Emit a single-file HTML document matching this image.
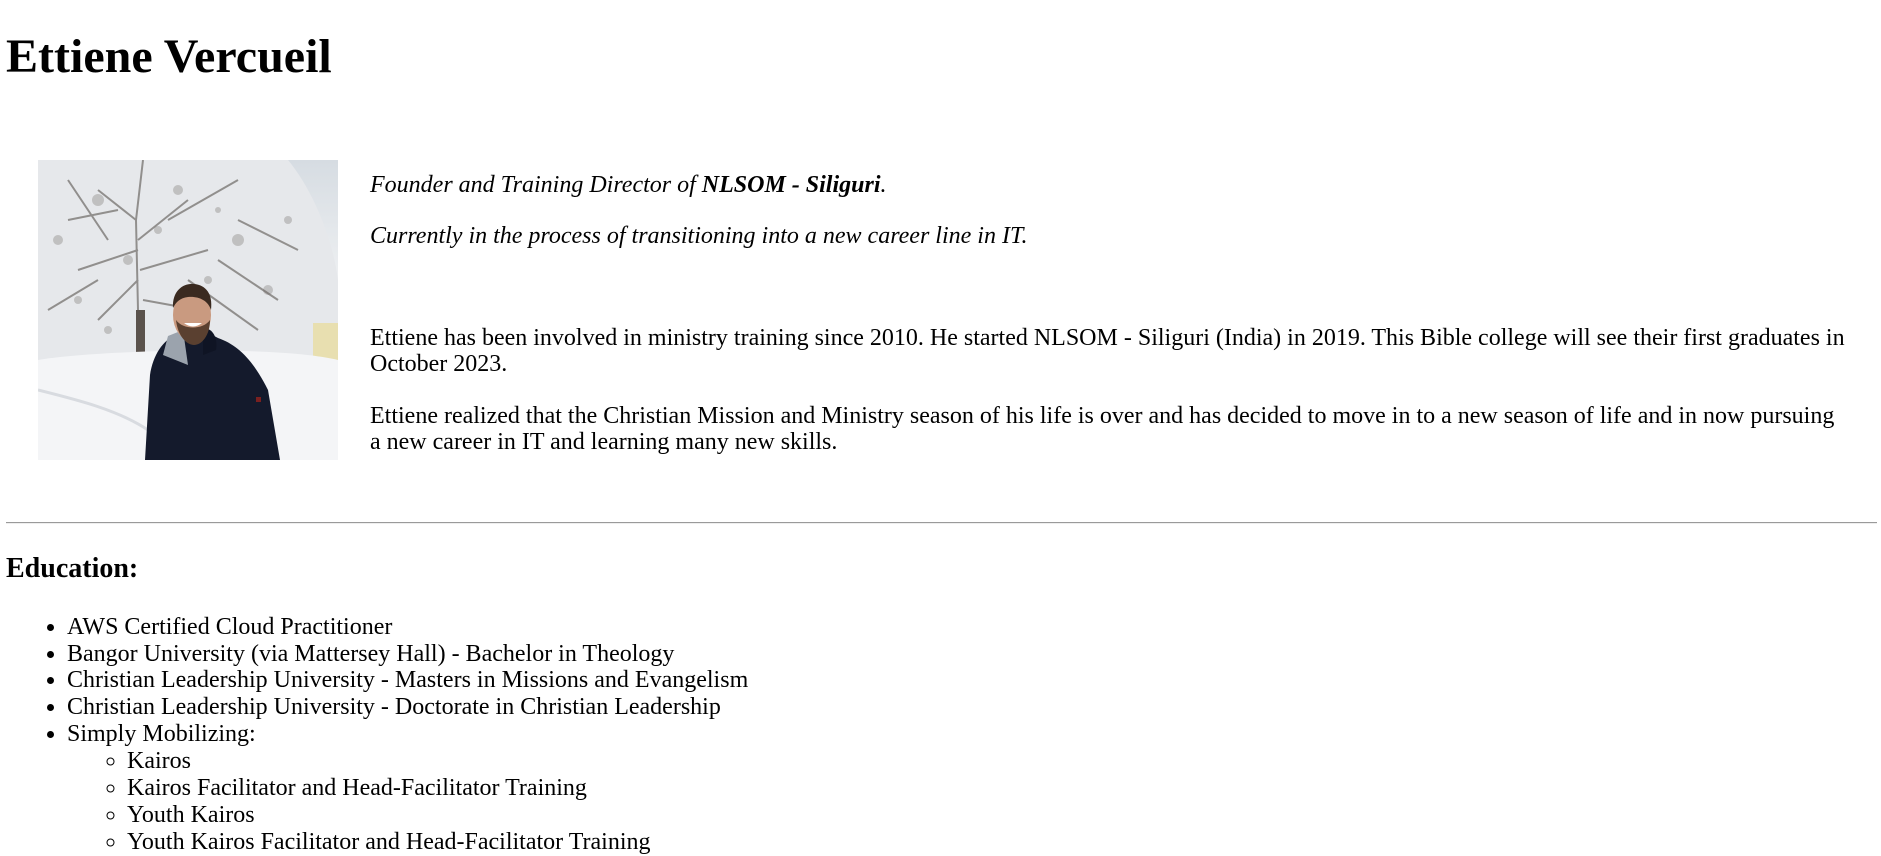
<!DOCTYPE html>
<html><head><meta charset="utf-8"><style>
html,body{margin:0;padding:0;background:#fff;}
body{width:1881px;height:855px;position:relative;overflow:hidden;font-family:"Liberation Serif","Times New Roman",serif;color:#000;font-size:24px;line-height:26.57px;}
.a{position:absolute;margin:0;white-space:nowrap;}
h1{font-size:48px;line-height:53.14px;font-weight:bold;}
h3{font-size:28px;line-height:31px;font-weight:bold;}
ul{margin:0;padding-left:59px;}
ul ul{padding-left:60px;list-style:circle;}
li{line-height:26.9px;}
hr.a{left:6px;width:1871px;top:522px;height:0;border:0;border-top:1px solid #9a9a9a;border-bottom:1px solid #eee;}
</style></head><body>
<h1 class="a" style="left:6px;top:29.5px;">Ettiene Vercueil</h1>

<svg class="a" style="left:38px;top:160px;" width="300" height="300" viewBox="0 0 300 300">
<defs><linearGradient id="sk" x1="0" y1="0" x2="0" y2="1"><stop offset="0" stop-color="#d6dce2"/><stop offset="1" stop-color="#eef0f2"/></linearGradient></defs>
<rect width="300" height="300" fill="#f0f1f3"/>
<rect x="230" y="0" width="70" height="120" fill="url(#sk)"/>
<path d="M0 0H250C275 30 295 80 300 120V200H0Z" fill="#e6e8eb"/>
<g stroke="#5a5550" stroke-width="2" fill="none" opacity=".6">
<path d="M105 0L98 60L100 150L105 160"/><path d="M98 60L60 30M100 80L150 40M100 90L40 110M102 110L170 90M100 120L60 160M105 140L160 150M80 50L30 60M130 60L200 20M60 120L10 150"/>
<path d="M200 60L260 90M180 100L240 140M30 20L70 80M150 120L220 170"/>
</g>
<g fill="#6a6560" opacity=".3">
<circle cx="60" cy="40" r="6"/><circle cx="140" cy="30" r="5"/><circle cx="200" cy="80" r="6"/><circle cx="90" cy="100" r="5"/><circle cx="40" cy="140" r="4"/><circle cx="230" cy="130" r="5"/><circle cx="170" cy="120" r="4"/><circle cx="20" cy="80" r="5"/><circle cx="120" cy="70" r="4"/><circle cx="250" cy="60" r="4"/><circle cx="70" cy="170" r="4"/><circle cx="180" cy="50" r="3"/>
</g>
<rect x="98" y="150" width="9" height="50" fill="#5a524c"/>
<rect x="275" y="163" width="25" height="42" fill="#e8dfb0"/>
<path d="M0 200C60 190 240 185 300 200V300H0Z" fill="#f4f5f7"/>
<path d="M0 230C40 240 80 250 110 270" stroke="#d8dbe0" stroke-width="3" fill="none"/>
<path d="M107 300L112 215C115 195 125 180 138 175L145 172L165 170L180 178C200 185 215 200 230 230L242 300Z" fill="#141a2c"/>
<path d="M125 195L130 176L145 170L150 205Z" fill="#9ba3ad"/>
<path d="M165 168C175 168 180 178 178 190L165 195Z" fill="#0f1424"/>
<ellipse cx="154" cy="155" rx="19" ry="26" fill="#c99a80"/>
<path d="M135 148C134 130 146 123 156 124C168 125 175 134 173 150C170 140 160 136 150 137C142 138 138 142 135 148Z" fill="#3a2a20"/>
<path d="M138 160C140 178 150 185 156 185C164 185 172 175 172 160C165 170 145 170 138 160Z" fill="#5a4030"/>
<path d="M146 163Q155 170 164 163Z" fill="#fff"/>
<rect x="218" y="237" width="5" height="5" fill="#7a2020"/>
</svg>

<p class="a" style="left:370px;top:172px;font-style:italic;">Founder and Training Director of <b>NLSOM - Siliguri</b>.</p>
<p class="a" style="left:370px;top:223px;font-style:italic;">Currently in the process of transitioning into a new career line in IT.</p>
<p class="a" style="left:370px;top:324.5px;">Ettiene has been involved in ministry training since 2010. He started NLSOM - Siliguri (India) in 2019. This Bible college will see their first graduates in<br>October 2023.</p>
<p class="a" style="left:370px;top:402.5px;">Ettiene realized that the Christian Mission and Ministry season of his life is over and has decided to move in to a new season of life and in now pursuing<br>a new career in IT and learning many new skills.</p>

<hr class="a">
<h3 class="a" style="left:6px;top:553px;">Education:</h3>
<div class="a" style="left:8px;top:613.6px;">
<ul>
<li>AWS Certified Cloud Practitioner</li>
<li>Bangor University (via Mattersey Hall) - Bachelor in Theology</li>
<li>Christian Leadership University - Masters in Missions and Evangelism</li>
<li>Christian Leadership University - Doctorate in Christian Leadership</li>
<li>Simply Mobilizing:
<ul>
<li>Kairos</li>
<li>Kairos Facilitator and Head-Facilitator Training</li>
<li>Youth Kairos</li>
<li>Youth Kairos Facilitator and Head-Facilitator Training</li>
</ul></li>
</ul>
</div>
</body></html>
